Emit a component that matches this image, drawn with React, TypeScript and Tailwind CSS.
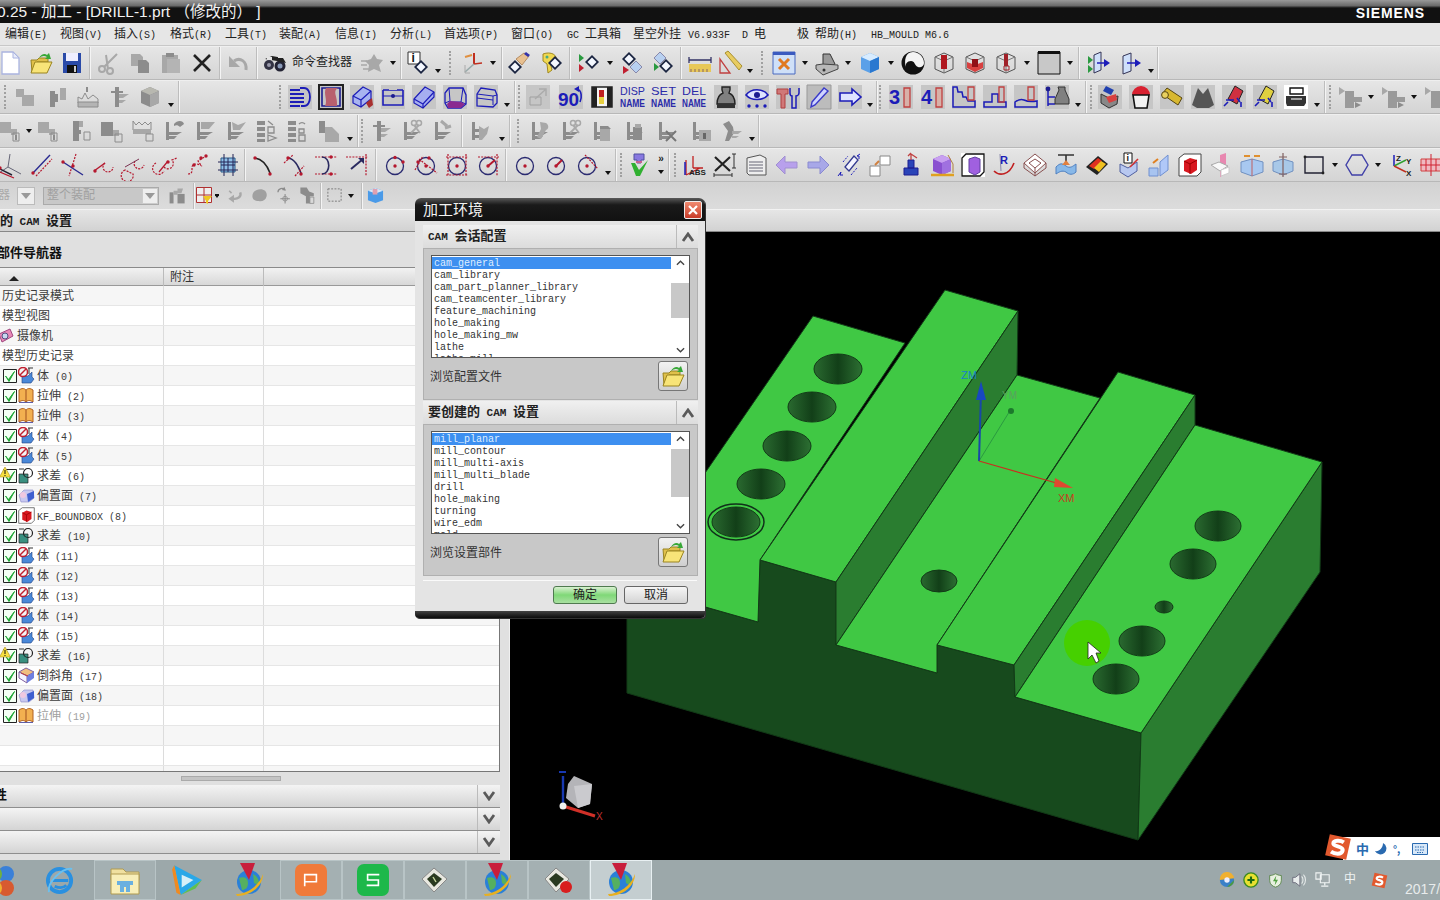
import React, { ReactNode } from 'react';

const B = '#1c1cb8', R = '#b5182e', Gr = '#a8a8a8', Gd = '#8c8c8c', Dk = '#2a2a70';
const P = (d: string, f = 'none', s = 'none', w = 1, da?: string) => <path d={d} fill={f} stroke={s} strokeWidth={w} strokeDasharray={da} />;
const C = (x: number, y: number, r: number, f = 'none', s = 'none', w = 1) => <circle cx={x} cy={y} r={r} fill={f} stroke={s} strokeWidth={w} />;
const Tile = <rect width="24" height="24" fill="#c6c6c6" />;
const Dia = (x: number, y: number, c = '#f4f8ff') => <>{P(`M${x} ${y - 7}l7 7-7 7-7-7z`, '#1a2440')}{P(`M${x} ${y - 4.5}l4.5 4.5-4.5 4.5-4.5-4.5z`, c)}</>;
const Txt = (x: number, y: number, t: string, f: string, s = 9, w = 400, tl?: number) => <text x={x} y={y} fill={f} fontSize={s} fontWeight={w} textLength={tl} lengthAdjust={tl ? 'spacingAndGlyphs' : undefined} fontFamily="Liberation Sans, sans-serif">{t}</text>;
const Cube = (c1: string, c2: string, c3: string) => <>{P('M12 2l9 4v12l-9 4-9-4V6z', c2)}{P('M3 6l9 4 9-4-9-4z', c1)}{P('M12 10l9-4v12l-9 4z', c3)}</>;
const Wire = (inner: ReactNode) => <>{P('M12 2l9 4v12l-9 4-9-4V6z', 'none', '#555')}{P('M3 6l9 4 9-4M12 10v12', 'none', '#777')}{inner}</>;
const Rd = (d: string) => P(d, 'none', R, 1.2, '2 1.2');
const Dot = (x: number, y: number, c = R) => C(x, y, 1.7, c);
const Ci = (inner: ReactNode) => <>{C(12, 13, 8.5, 'none', Dk, 1.3)}{Dot(12, 13)}{inner}</>;

const ghostStep = P('M2 4h8v6h10v11H8V12H2z', Gr);
const ghostSub = <>{P('M2 3h11v7h6v6h-6v-2H2z', Gr)}{P('M15 14h6v8h-6z', 'none', Gd)}{P('M17 16h2v5h-2z', Gd)}</>;
const flange = <>{P('M4 3h3v18H4zM7 13h13l-5 3H7zM7 17h8l-3 3H7z', Gd)}</>;

const I: Record<string, ReactNode> = {
  new: <>{P('M4 1h11l6 6v16H4z', '#fff', '#aab4e0', 1.3)}{P('M15 1v6h6z', '#e8ecfa', '#aab4e0')}</>,
  open: <>{P('M2 9h6l2-2h9v4H8L3 21z', '#e0c04a', '#9a8420')}{P('M6 11h17l-5 11H2z', '#f8e478', '#9a8420')}{P('M10 7C12 3 16 2 18 4l2-2 2 6-6 0 2-2C15 4 13 5 10 7z', '#38a838')}</>,
  save: <>{P('M3 2h18v20H3z', '#2a4aa8')}{P('M6 2h12v8H6z', '#eef')}{P('M7 14h10v8H7z', '#111')}{P('M14 15h2v6h-2z', '#ccc')}</>,
  cut: <>{C(5, 18, 3, 'none', Gr, 2)}{C(13, 20, 3, 'none', Gr, 2)}{P('M7 16L20 3M11 18L9 4', 'none', Gr, 2)}</>,
  copy: <>{P('M3 3h9l3 3v9H3z', Gr)}{P('M10 9h8l3 3v10H10z', Gd)}</>,
  paste: <>{P('M3 4h16v18H3z', Gr)}{P('M7 2h8v4H7z', Gd)}{P('M8 8h13v14H8z', '#b4b4b4')}</>,
  x: P('M4 4L20 20M20 4L4 20', 'none', '#222', 2.6),
  undo: <>{P('M20 19C21 10 14 6 8 10', 'none', Gr, 3)}{P('M3 5v11h11z', Gr)}</>,
  binoc: <>{C(6, 14, 5, '#334')}{C(17, 15, 5.5, '#223')}{C(17, 15, 2.5, '#8a9ab8')}{C(6, 14, 2, '#99a')}{P('M2 8l7-3 11 2 3 5-9-2z', '#222')}{P('M4 6h5v3H4zM15 5h5v2h-5z', '#e4e4e4')}</>,
  star: <>{P('M14 3l3 5 6 1-4 5 2 7-7-3-6 3 1-7-4-4 6-2z', Gr)}{P('M1 10h6M1 14h6M3 18h6', 'none', Gr, 1.5)}</>,
  info: <>{P('M2 1h12v12H2z', '#fff', '#333')}{Txt(5.5, 11, 'i', '#111', 12, 700)}{Dia(15, 16)}</>,
  axes: <>{P('M14 13V2', 'none', '#c03020', 2)}{P('M14 13l8-1', 'none', '#c03020', 1.5)}{P('M14 13L5 21', 'none', '#9aa', 1.6)}{P('M5 6l7-2', 'none', '#e09040', 2)}{P('M5 14v8h5', 'none', '#aaa')}</>,
  hand: <>{Dia(7, 16)}{P('M8 8l8-6 5 3-7 9z', '#e8c090', '#a87c50', .8)}{P('M18 1l4 3-2 2-4-3z', '#33a')}</>,
  palette: <>{P('M4 3c8-3 15 1 13 7l-6 1 2 8-4 3-1-9-4-3z', '#f0d850', '#a08820')}{C(8, 6, 1.5, '#4a8')}{Dia(16, 12)}</>,
  d1: <>{P('M2 3l5 4-5 4z', '#2a9a40')}{P('M2 13l5 4-5 4z', '#c02030')}{Dia(15, 11)}</>,
  d2: <>{Dia(9, 8)}{P('M3 15l6 4-6 4z', '#c02030')}{P('M16 10l6 6-6 6-6-6z', '#b8d0f0', '#88a')}</>,
  d3: <>{P('M9 1l6 6-6 6-6-6z', '#b8d0f0', '#88a')}{Dia(15, 15)}{P('M3 12l5 4-5 4z', '#2a9a40')}</>,
  ruler: <>{P('M2 13h22v8H2z', '#e8c858')}{P('M2 9h22M2 6v6M24 6v6', 'none', '#336', 1.3)}{P('M4 21v-3M8 21v-3M12 21v-3M16 21v-3M20 21v-3', 'none', '#866')}</>,
  angle: <>{P('M2 22V8L12 22z', 'none', '#c04040', 1.3)}{P('M7 2l3-2 14 15-3 4z', '#e8cc60', '#a89030')}</>,
  winx: <>{P('M1 1h22v22H1z', '#cfe0f8', '#4a6ac0')}{P('M1 1h22v3H1z', '#3a5ac0')}{P('M7 8l10 10M17 8L7 18', 'none', '#e07820', 3)}</>,
  scan: <>{P('M8 3h7l5 10-9 4-3-3z', '#9a9a9a', '#333')}{P('M1 14l7-1 15 1v4L8 24 1 18z', '#b8b8b8', '#444')}{C(9, 19, 1.5, '#333')}</>,
  cube: Cube('#d8ecff', '#5aa0e8', '#2a78d0'),
  ball: <>{C(12, 12, 11.5, '#111')}{P('M12 1c6 0 11 5 11 11 0 3-3 5-6 4-4-2-3-6-7-6-4 0-6 3-5 7C3 10 4 1 12 1z', '#f4f4f4')}</>,
  box1: Wire(<>{P('M9 4h6v14H9z', '#b01820')}</>),
  box2: Wire(<>{P('M4 11l8 3 8-3v6l-8 4-8-4z', '#d84040')}{P('M9 8h6v8H9z', '#901018')}</>),
  box3: Wire(<>{P('M10 3h4v12h-4z', '#a02028')}{P('M10 15h5v4h-5z', 'none', '#a02028')}</>),
  blank: <>{P('M1 1h22v22H1z', '#c8c8c8', '#111', 1)}{P('M1 0h22v3H1z', '#111')}</>,
  door1: <>{P('M2 5l5 4-5 4zM2 14l5 4-5 4z', '#2a9a40')}{P('M8 4l7-3v18l-7 3z', '#cfe0fa', '#335')}{P('M11 12h9', 'none', B, 1.5)}{P('M18 8l6 4-6 4z', B)}</>,
  door2: <>{P('M4 5l8-3v18l-8 3z', '#cfe0fa', '#335')}{P('M8 12h10', 'none', B, 1.5)}{P('M16 8l6 4-6 4z', B)}</>,

  g1: ghostStep,
  g2: <>{P('M5 6h5v16H5zM10 9h3v8h-3z', Gd)}{P('M15 3h6v12h-6z', Gr)}</>,
  g3: <>{P('M2 12l4 2 3-6 3 6 5-4 5 4v4H2z', 'none', Gd)}{P('M2 17h20v5H2z', '#b4b4b4', Gd)}{P('M11 2v5', 'none', Gd, 2)}</>,
  g4: <>{P('M8 2h4v20H8z', Gd)}{P('M12 9h10l-6 4h-4zM12 15h7l-4 3h-3z', Gr)}{P('M4 7h12', 'none', Gd, 2)}</>,
  g5: Cube('#b8b8b0', '#8c8c8c', '#a8a8a8'),
  g6: ghostSub,
  g7: <>{P('M4 2h6v9h2v4H10v7H4z', Gd)}{P('M10 2h4v6h-4z', Gr)}{P('M15 13h6v8h-6z', 'none', Gd)}</>,
  g8: <>{P('M1 3h12v14H1z', Gd)}{P('M13 11h6v6h-6z', Gr)}{P('M15 15h7v8h-7z', 'none', Gd)}</>,
  g9: <>{P('M2 2l3 4 3-3 3 3 3-3 3 3 3-3v8H2z', 'none', Gd)}{P('M2 10h18v5H2z', Gr)}{P('M15 15h7v7h-7z', 'none', Gd)}</>,
  g10: <>{flange}{P('M12 5c3-4 9-4 10 0l-4 3c-2-2-4-2-6-1z', Gd)}</>,
  g11: <>{flange}{P('M8 3h14l-6 7H8z', Gr)}</>,
  g12: <>{flange}{P('M8 3l6 3 8-3-6 8H9z', Gr)}</>,
  g13: <>{P('M2 2h8v4H2zM2 8h8v4H2zM2 14h8v4H2zM2 20h8v3H2z', Gd)}{P('M13 2l5 4M13 8h6v6h-6zM13 16l8 3-8 3z', 'none', Gd, 1.3)}</>,
  g14: <>{P('M2 2h8v4H2zM2 8h8v4H2zM2 14h8v4H2zM2 20h8v3H2z', Gd)}{P('M13 5a4 4 0 016 0M13 10h5v4h-5zM13 16h6v6h-6z', 'none', Gd, 1.3)}</>,
  g15: <>{P('M2 2h6v12H2z', Gd)}{P('M8 8h7l7 7v8H8z', Gr)}</>,
  g16: <>{flange}{P('M10 2l6 5M14 9l6-2', 'none', Gr, 3)}</>,
  g17: <>{P('M3 3h3v18H3zM6 10h6v3H6zM6 16h4v3H6z', Gd)}{P('M10 7l5 3 5-3-2 8-5 6h-3z', Gr)}</>,
  g19: <>{P('M2 8h5v14H2z', Gd)}{P('M7 6h5v5h-5zM12 3h7l-2 6h-5z', Gr)}{P('M12 10h9v12h-9z', Gd)}</>,
  gw: <>{flange}{P('M12 3l6 1c3 2 3 6 0 7l-5 9-4-2 4-8z', Gr)}</>,
  gs: <>{flange}{C(19, 4, 2.5, 'none', Gr, 1.5)}{C(14, 4, 2.5, 'none', Gr, 1.5)}{P('M19 6l-8 8M14 6l6 8', 'none', Gr, 1.8)}</>,
  gc: <>{flange}{P('M10 10h10v12H10z', Gr)}{P('M10 7h8l3 3H10z', Gd)}</>,
  gd: <>{flange}{P('M10 8h9v13H10z', Gd)}{P('M12 5h6v4h-6z', Gr)}</>,
  gx: <>{flange}{P('M11 12l10 10M21 12L11 22', 'none', '#777', 2)}</>,
  gi: <>{flange}{P('M10 11h12v11H10z', Gr)}{P('M14 14h3v6h-3z', '#666')}</>,
  gh: <>{P('M3 5l6-3 4 6 1 6-5 8H5l3-10z', Gd)}{P('M12 12h10l-4 3h-6zM12 17h7l-3 2h-4z', Gr)}</>,
  gfa: <>{P('M1 2l6 4-6 4z', Gr)}{P('M7 6h9v6h8v5h-8v6H7z', '#9a9a9a')}{P('M17 17l6 3-6 3z', Gd)}</>,
  lines: <>{Tile}{P('M2 5h10M2 9h14M2 13h14M2 17h14M2 21h10', 'none', B, 2)}{P('M12 3h4c8 0 8 18 0 18h-3', 'none', B, 1.8)}</>,
  sq: <>{P('M0 0h24v24H0z', '#c6c6c6', '#222', 2)}{P('M3 3h18v18H3z', 'none', '#1c1c90', 1.6)}{P('M7 3h12c-6 4 0 8-1 18H6c3-6-2-12 1-18z', '#b8606e')}</>,
  cuboid: <>{Tile}{P('M3 11L13 2l8 4v8L11 22l-8-4z', '#a8b4f0', B, 1.2)}{P('M3 11l8 4 10-9M11 15v7', 'none', B, 1.2)}{P('M16 18l6-5 1 7-4 3z', '#a83030')}</>,
  dash: <>{Tile}{P('M2 5h20M2 5v15h20V5', 'none', B, 1.6)}{P('M8 2h8v3H8z', '#c6c6c6')}{P('M2 11h20', 'none', B)}{C(12, 11, 2, '#1c1c90')}</>,
  slab: <>{Tile}{P('M2 14L13 2l9 5v5L11 23l-9-5z', '#a6aef0', B, 1.2)}{P('M2 14l9 5 11-12M11 19v4', 'none', B, 1.2)}</>,
  wire: <>{Tile}{P('M6 3h14l3 7v9l-5 4H5l-3-5V8z', 'none', B, 1.3)}{P('M6 3L7 16l-5 2M20 3l-2 14H7M18 17l5 2', 'none', B, 1)}{P('M4 19l3-3 11 1 4 2-4 4H5z', '#8a2a90')}</>,
  wire2: <>{Tile}{P('M3 9l4-6 14 2 2 5v8l-4 4-16-1z', 'none', B, 1.3)}{P('M3 9l16 2 4-1M19 11v9M3 13l16 2', 'none', B, 1)}</>,
  arr: <>{Tile}{P('M4 12h11v8H4z', 'none', '#a0a0a0')}{P('M9 14L19 5M13 4h7v7', 'none', '#aaa', 1.4)}</>,
  n90: <>{Tile}{Txt(-1, 21, '90', B, 19, 700)}{P('M18 4c5 1 5 9 3 13', 'none', B, 1.6)}{P('M15 4l5-3v6z', B)}</>,
  bk: <>{P('M2 2h20v20H2z', '#f4f4f4', '#222', 1.5)}{P('M2 2h5v20H2zM17 2h5v20h-5z', '#222')}{P('M9 5h5v7H9z', '#c02020')}{P('M9 12h5v7H9z', '#e8d040')}</>,
  disp: <>{Txt(-1, 10, 'DISP', '#2a2aa8', 11, 400, 25)}{Txt(-1, 22, 'NAME', '#2a2aa8', 10, 700, 25)}</>,
  set: <>{Txt(-1, 10, 'SET', '#2a2aa8', 11, 400, 25)}{Txt(-1, 22, 'NAME', '#2a2aa8', 10, 700, 25)}</>,
  del: <>{Txt(-1, 10, 'DEL', '#2a2aa8', 11, 400, 24)}{Txt(-1, 22, 'NAME', '#2a2aa8', 10, 700, 24)}</>,
  vase: <>{Tile}{P('M8 2h8v3l-1 3c5 2 6 6 6 11H3c0-5 1-9 6-11L8 5z', '#808080', '#222', 1.4)}{P('M3 19h18v4H3z', '#333')}</>,
  eye: <>{Tile}{P('M1 10c5-7 17-7 22 0-5 6-17 6-22 0z', '#dfe4ff', B, 1.6)}{C(12, 10, 3, '#1c1c90')}{Dot(4, 21, B)}{Dot(12, 21, B)}{Dot(20, 21, B)}</>,
  tw: <>{Tile}{P('M1 4h11v5H9v14H5V9H1z', '#d07878', '#b04040', 1)}{P('M14 3v5c0 2 1 3 2 3v12h4V11c1 0 3-1 3-3V3', 'none', B, 1.5)}</>,
  pen: <>{P('M0 0h24v24H0z', '#bcbcbc', '#999')}{P('M5 17L17 3l4 3L8 20l-4 2z', '#cfd4ff', '#3a3ac8', 1.4)}</>,
  arro: <>{Tile}{P('M2 8h12V4l9 8-9 8v-4H2z', '#dfe4ff', B, 1.6)}</>,
  n3: <>{Tile}{Txt(0, 19, '3', B, 20, 700)}{P('M15 3h6v19h-6z', '#d8b0a8', '#c04040', 1.3)}</>,
  n4: <>{Tile}{Txt(0, 19, '4', B, 20, 700)}{P('M15 3h6v19h-6z', '#d8b0a8', '#c04040', 1.3)}</>,
  stair: <>{Tile}{P('M1 2h4l1 5h4l1 5h3l2 4h7v6H1z', 'none', B, 1.5)}{P('M16 2h6v13h-6z', 'none', '#c04040', 1.3)}</>,
  step: <>{Tile}{P('M1 22v-5h8V9h6v8h8v5z', 'none', B, 1.5)}{P('M16 2h5v15h-5z', 'none', '#c04040', 1.3)}</>,
  wave: <>{Tile}{P('M1 22v-5c4-3 6-3 9-2 4 2 7 2 13 1v6z', 'none', B, 1.5)}{P('M14 2h6v13h-6z', 'none', '#c04040', 1.3)}</>,
  nodev: <>{Tile}{P('M3 4v17M3 12h7M3 19h7', 'none', B, 1.5)}{C(3, 4, 2.4, '#1c1c90')}{P('M13 2h7v3l4 9v5H10v-5l4-9z', '#808080', '#333')}</>,
  bl: <>{Tile}{P('M8 1l8 4-3 5-8-4z', '#2040b0')}{P('M3 9l8 4 9-2-1 8-8 4-8-5z', '#888', '#333')}{P('M8 12l10-3 1 6-8 3z', '#d84040')}</>,
  dome: <>{Tile}{P('M3 10a9 9 0 0118 0z', '#d82030')}{P('M4 10h16l-2 13H6z', '#f2f2f2', '#111', 1.6)}</>,
  cyl: <>{Tile}{P('M2 9l5-6 15 10-4 7z', '#d8b830', '#554410', 1)}{C(5, 10, 3.4, '#e8d060', '#554410')}</>,
  frus: <>{Tile}{P('M7 3h10l6 17-5 3H6l-5-3z', '#555')}{P('M7 3h10l-5 6z', '#ccc')}</>,
  redxy: <>{Tile}{P('M6 14L13 1l8 5-6 13z', '#d03040', '#222')}{P('M2 21l4-4M4 15h8M15 13l3 4M19 17v5', 'none', B, 1.6)}</>,
  yelxy: <>{Tile}{P('M6 14L13 1l8 5-6 13z', '#e0d040', '#222')}{P('M2 21l4-4M4 15h8M15 13l3 4M19 17v5', 'none', B, 1.6)}</>,
  print: <>{P('M0 0h24v24H0z', '#fff')}{P('M6 3h13v6H6z', '#fff', '#111', 1.4)}{P('M2 11h20v7l-2 3H3l-1-3z', '#333')}{P('M7 14h11', 'none', '#ddd', 1.3)}</>,

  rAx: <>{P('M10 14L12 1M10 14l13 7M10 14L1 20', 'none', '#667', 1)}{P('M0 15l14 7', 'none', '#223', 1.5)}{P('M2 19l14 6', 'none', R, 1.2)}{Dot(2, 15)}</>,
  rLine: <>{P('M3 20L20 2', 'none', '#2a2a90', 1.4)}{Rd('M6 23L22 6')}{Dot(3, 20)}</>,
  rCross: <>{Rd('M15 1L8 23')}{P('M2 9l20 13', 'none', '#2a2a90', 1.4)}{Dot(2, 9)}{Dot(12, 13)}</>,
  rRope: <>{P('M2 18L13 10', 'none', R, 1.5)}{Rd('M13 10a5 5 0 108 4')}{Dot(3, 18)}</>,
  rRope2: <>{Rd('M2 17a6 6 0 108 4zM12 8a5 5 0 109 4')}{P('M2 14l14-8', 'none', '#7a3050', 1)}</>,
  rOpen: <>{Rd('M2 10a6 6 0 108 8M10 14a5 5 0 108-7l5-2')}{P('M5 19L14 8', 'none', R, 1.2)}{Dot(14, 9)}</>,
  rOpen2: <>{Rd('M3 21c8 0 0-10 8-10 6 0 8 6 2-3l8-5')}{Dot(16, 5)}{Dot(21, 3)}{Dot(9, 12)}</>,
  grid: <>{P('M5 5h14v14H5z', '#8fc0e8', '#2a5a88')}{P('M12 5v14M5 12h14M2 9h20M2 17h20M8 1v22M17 1v22', 'none', '#225', 1)}</>,
  arc1: <>{P('M3 5c7 1 12 7 15 15', 'none', '#222', 1.6)}{Dot(3, 5)}{Dot(18, 21)}</>,
  arc2: <>{P('M5 5c7 1 10 8 13 15', 'none', '#2a2a60', 1.6)}{Rd('M1 10l9-8M12 23l9-10')}{Dot(5, 5)}{Dot(18, 21)}</>,
  arc3: <>{Rd('M1 4h22M1 21h22')}{P('M8 4c9 0 9 17 0 17', 'none', '#2a2a60', 1.6)}{Dot(17, 4)}{Dot(17, 21)}</>,
  arc4: <>{Rd('M1 4h22M21 1v22')}{P('M6 16L18 6', 'none', '#2a2a60', 2)}{P('M13 5h6v6z', '#2a2a60')}</>,
  c1: Ci(<>{Dot(20, 9)}{Dot(12, 4.5)}</>),
  c2: Ci(<>{Rd('M5 6l18 14M1 17l8-14')}{Dot(4, 9)}{Dot(15, 5)}</>),
  c3: Ci(Rd('M1 4h22M1 22h22M3 1v22M21 1v22')),
  c4: Ci(<>{Rd('M2 4h21M21 1v22')}{P('M12 13l7-6', 'none', R, 2)}</>),
  c5: Ci(null),
  c6: Ci(P('M12 13l6-6', 'none', R, 2)),
  c7: Ci(Rd('M10 2l13 14')),
  chk: <>{P('M6 1h10v6h-3v3H9V7H6z', '#8878e0', '#5050a0')}{P('M3 10l4 0 4 7 9-10-8 16H8z', '#30b030')}{P('M8 8h6v2H8z', '#c86090')}</>,
  abs: <>{P('M4 22V7M4 22l14-7M11 15V3M11 15h10', 'none', '#c02020', 1.3)}{P('M3 22V9', 'none', B, 1.5)}{Txt(7, 22, 'ABS', '#222', 8, 700)}</>,
  xd: <>{P('M2 4l15 14M17 4L2 18', 'none', '#222', 2.2)}{P('M19 1h4M21 1v14M19 15h4M1 22h18M1 20v4M19 20v4', 'none', '#333')}</>,
  lst: <>{P('M3 5l13-3 6 3v17H5L3 20z', '#eee', '#555')}{P('M5 9h14M5 12h14M5 15h14M5 18h14', 'none', '#667')}</>,
  al: P('M10 3L1 12l9 9v-6h12V9H10z', '#b8a0ec', '#a090d0'),
  ar: P('M14 3l9 9-9 9v-6H2V9h12z', '#a8a8e8', '#8a8ad0'),
  flip: <>{P('M8 14L17 3l4 4-9 11z', '#f4f4ff', '#333a90', 1.3)}{P('M1 23l3-4-1 3h3M23 1l-3 2h2v3', 'none', B, 1)}{P('M6 9l5-6M14 22l6-7', 'none', B, 1, '2 1.5')}</>,
  sq2: <>{P('M12 3h10v9H12z', '#fff', '#888')}{P('M2 13h10v10H2z', '#fff', '#888')}{P('M7 12l4-4', 'none', '#d08040', 2)}</>,
  plat: <>{P('M5 15h14v7H5zM9 7h6v8H9z', '#2a44b8', '#1c1c90')}{P('M12 7V1M12 1l6 4M9 3l3-3', 'none', '#c04040', 1.3)}</>,
  pmea: <>{Cube('#c8a0f0', '#8a50d0', '#a070e0')}{P('M1 22h23', 'none', '#e0a020', 2.5)}{P('M18 2l5 9v9', 'none', '#b08040')}</>,
  boxp: <>{P('M0 0h24v24H0z', '#fff')}{P('M5 1h18v18l-4 4H1V5z', 'none', '#111', 1.3)}{P('M8 6l6-2 5 2v13l-5 3-6-3z', '#a060e0', '#6040a0')}{P('M1 5l4-4M19 23l4-4', 'none', '#111')}</>,
  rarc: <>{Txt(8, 11, 'R', B, 11, 700)}{P('M2 18c5 5 15 5 20-8', 'none', '#c02020', 1.6)}{P('M8 1l1 17', 'none', '#88a')}</>,
  wf: <>{P('M12 1l11 9-11 10L1 10z', '#fff', '#885050')}{P('M12 6l6 4-6 5-6-5zM12 15v8M1 10v5l11 8 11-8v-5', 'none', '#885050')}</>,
  mold: <>{P('M4 2h16M12 2v8', 'none', '#333', 1.6)}{P('M2 14c4-4 6-4 10-1 4 3 7 0 10-2v8c-3 3-7 3-10 0-4-2-7 0-10 2z', '#88b8e8', '#5080c0')}{P('M8 12h8l-4-5z', '#e08040')}</>,
  stripe: <>{P('M1 14L13 3l10 8-11 11z', '#222')}{P('M4 13L13 5l4 3-8 8z', '#e03020')}{P('M9 15l7-7 5 3-7 8z', '#f0c020')}</>,
  bi: <>{P('M4 11l8 4 9-6v9l-9 6-8-5z', '#b8c8f0', '#5060a0')}{P('M8 0h8v10H8z', '#fff', '#111')}{Txt(10.5, 8, 'i', '#111', 9, 700)}{P('M14 14l8-8', 'none', '#d03030', 1.6)}</>,
  cyls: <>{P('M13 9l8-7v15l-8 6z', '#b0c8f8', '#7090d0')}{P('M2 15h9v8H2z', '#a8c4f0', '#7090d0')}{P('M6 10l5-4', 'none', '#e08020', 2)}</>,
  kf: <>{P('M1 5l5-4h17v18l-4 4H1z', '#fff', '#444')}{P('M6 8l6-3 7 2v10l-6 4-7-3z', '#d81820')}{P('M6 8l6 3 7-4M12 11v10', 'none', '#900')}</>,
  pln: <>{P('M11 2l6-2v20l-6 4z', '#e888b0')}{P('M2 12l8-3 9 4-8 5z', '#f8f8f8', '#aaa')}{P('M12 17l8-3v6l-8 3z', '#fff', '#ccc')}</>,
  blk2: <>{P('M1 9l11-3 11 3v10l-11 4-11-4z', '#a8c8f0', '#7090c0')}{P('M12 6v17', 'none', '#c06060')}{P('M4 3h6M14 3h6', 'none', '#e09030', 2)}</>,
  blk3: <>{P('M2 9l10-3 10 3v9l-10 4-10-4z', '#a8c8e8', '#7090c0')}{P('M12 0v24M8 4h8M8 21h8', 'none', '#806060', 1.2)}</>,
  rect: <>{P('M3 4h18v16H3z', 'none', '#223', 1.4)}{C(3, 4, 1.4, '#222')}{C(21, 20, 1.4, '#222')}</>,
  hex: P('M7 2h10l6 10-6 10H7L1 12z', 'none', '#4040a8', 1.4),
  xyz: <>{P('M6 13V2', 'none', B, 1.5)}{P('M6 13l12-6', 'none', '#30a030', 1.5)}{P('M6 13l12 6', 'none', '#c03020', 1.5)}{Txt(8, 8, 'Z', '#222', 8, 700)}{Txt(18, 11, 'Y', '#222', 8, 700)}{Txt(18, 23, 'X', '#222', 8, 700)}</>,
  tgt: <>{P('M2 6h20v12H2z', '#f0b8c0', '#d04040')}{P('M12 1v22M1 12h22M7 6v12M17 6v12', 'none', '#d02030', 1)}</>,
  uturn: <>{P('M18 8c2 6-4 9-9 8', 'none', Gr, 3)}{P('M10 11v10l-7-5z', Gr)}{P('M4 6l3 3', 'none', Gr, 2)}</>,
  blob: <>{P('M3 13c0-6 5-9 10-9 6 0 9 4 8 9-1 5-6 7-10 6-5 0-8-2-8-6z', '#a0a0a0')}</>,
  tcross: <>{P('M5 8a5 5 0 019-3', 'none', Gd, 1.6)}{P('M13 1l2 5-5-1z', Gd)}{P('M14 10v12M8 16h12', 'none', Gd, 1.3)}{C(14, 16, 3, 'none', Gd)}</>,
  gflag: <>{P('M3 2h8l3 5 6 2v4h-5v9h-5v-9L3 9z', Gd)}{P('M15 14h5v8h-5z', 'none', Gd)}</>,
};

const W: Record<string, string> = {
  1: 'w-[1px]', 2: 'w-[2px]', 3: 'w-[3px]', 4: 'w-[4px]', 5: 'w-[5px]', 6: 'w-[6px]', 7: 'w-[7px]', 8: 'w-[8px]', 9: 'w-[9px]', 10: 'w-[10px]',
  12: 'w-[12px]', 13: 'w-[13px]', 96: 'w-[96px]',
};

function Tok({ t }: { t: string }) {
  const c = t[0], n = t.slice(1);
  if (t === 'vv') return <div className="w-[12px] h-[33px] shrink-0 flex flex-col items-center justify-center gap-[6px]"><span className="text-[10px] leading-[8px] font-bold text-[#222]">»</span><i className="block w-0 h-0 border-x-[3px] border-t-[4px] border-x-transparent border-t-[#111]" /></div>;
  if (t.startsWith('vl')) return <div className={`${W[t.slice(2)]} h-[33px] shrink-0 flex justify-center items-end pb-[7px]`}><i className="block w-0 h-0 border-x-[3px] border-t-[4px] border-x-transparent border-t-[#111]" /></div>;
  if (c === 'v' && /^v\d+$/.test(t)) return <div className={`${W[n]} h-[25px] shrink-0 flex justify-center items-center`}><i className="block w-0 h-0 border-x-[3px] border-t-[4px] border-x-transparent border-t-[#111]" /></div>;
  if (c === '|') return <div className={`${W[n]} h-[33px] shrink-0 flex justify-center`}><i className="block w-[1px] h-full bg-[#bdbdbd] border-r border-r-[#f4f4f4] box-content" /></div>;
  if (c === '!') return <div className={`${W[n]} h-[33px] shrink-0 flex justify-center items-center`}><i className="block w-[2px] h-[24px] border-l-2 border-dotted border-l-[#a0a0a0]" /></div>;
  if (c === ':') return <div className={`${W[n]} shrink-0`} />;
  return <div className="w-[31px] h-[33px] shrink-0 flex items-center justify-center"><svg viewBox="0 0 24 24" className="w-[24px] h-[24px] overflow-visible">{I[t]}</svg></div>;
}
const Sm = ({ n, cls = 'w-[24px]' }: { n: string; cls?: string }) => <div className={`${cls} h-[26px] shrink-0 flex items-center justify-center`}><svg viewBox="0 0 24 24" className="w-[19px] h-[19px] shrink-0 overflow-visible">{I[n]}</svg></div>;
const Sh = ({ t }: { t: string }) => <div className="h-[26px] shrink-0 flex items-center overflow-hidden"><Tok t={t} /></div>;

function Row({ s, extra, cls = '' }: { s: string; extra?: ReactNode; cls?: string }) {
  return <div className={`h-[34px] shrink-0 flex items-center overflow-hidden border-b border-b-[#b8b8b8] border-t border-t-[#efefef] bg-gradient-to-b from-[#e6e6e6] to-[#d4d4d4] ${cls}`}>{s.trim().split(/\s+/).map((t, i) => <Tok key={i} t={t} />)}{extra}</div>;
}

const Mx = ({ t, s = 'text-[10px]' }: { t: string; s?: string }) => <>{t.split(/([\x00-\x7f]+)/).map((p, i) => /^[\x00-\x7f]+$/.test(p) ? <span key={i} className={s}>{p}</span> : p)}</>;

const menu: [string, string][] = [['编辑(E)', 'w-[55px]'], ['视图(V)', 'w-[54px]'], ['插入(S)', 'w-[56px]'], ['格式(R)', 'w-[55px]'], ['工具(T)', 'w-[54px]'], ['装配(A)', 'w-[56px]'], ['信息(I)', 'w-[55px]'], ['分析(L)', 'w-[54px]'], ['首选项(P)', 'w-[67px]'], ['窗口(O)', 'w-[56px]'], ['GC 工具箱', 'w-[66px]'], ['星空外挂', 'w-[55px]'], ['V6.933F', 'w-[54px]'], ['D 电', 'w-[55px]'], ['极', 'w-[18px]'], ['帮助(H)', 'w-[56px]'], ['HB_MOULD M6.6', 'w-[100px]']];

const Check = () => <svg viewBox="0 0 14 14" className="w-[14px] h-[14px] shrink-0">{P('M.5.5h13v13H.5z', '#f4fff4', '#222')}{P('M2.5 7l3 3.5 6-8-5.5 10z', '#22a838', '#22a838', 1)}</svg>;
const Body = <svg viewBox="0 0 17 17" className="w-[17px] h-[17px] shrink-0">{P('M4 9h6l4-4v5l2 2-3 4H4z', '#4a88d8', '#204080', .6)}{C(5, 5, 4.5, '#f4f4f4', '#c02030', 1.5)}{P('M2 8l6-6', 'none', '#c02030', 1.5)}{P('M10 1h5M11 1v6', 'none', '#333')}</svg>;
const Ext = <svg viewBox="0 0 17 17" className="w-[17px] h-[17px] shrink-0">{P('M1 3c3-2 5-2 7 0 2-2 4-2 7 0v12c-3-2-5-2-7 0-2-2-4-2-7 0z', '#f2b050', '#b06020')}{P('M8 3v12', 'none', '#a05020')}{P('M1 15h14v1H1z', '#6060a8')}</svg>;
const Sub = <svg viewBox="0 0 17 17" className="w-[17px] h-[17px] shrink-0">{P('M1 7h9v9H1z', '#3a9080', '#222', .7)}{C(10, 6, 4.5, 'none', '#222', 1.2)}{P('M1 2h5', 'none', '#333')}</svg>;
const Off = <svg viewBox="0 0 17 17" className="w-[17px] h-[17px] shrink-0">{P('M1 8l5-5h9l1 8-5 4H3z', '#c8c8f0', '#8888c8', .6)}{P('M9 7l7-3v7l-6 4z', '#4060d0')}{C(5, 8, 3, '#f0c8e0')}</svg>;
const Kf = <svg viewBox="0 0 24 24" className="w-[17px] h-[17px] shrink-0">{I.kf}</svg>;
const Chm = <svg viewBox="0 0 17 17" className="w-[17px] h-[17px] shrink-0">{P('M1 5l7-4 8 4-7 4z', '#f0c080', '#8060a0')}{P('M1 5l8 4v7l-8-5z', '#f4f4ff', '#8060a0')}{P('M9 9l7-4v6l-7 5z', '#7080e0')}{P('M3 6l7 3', 'none', '#c04040')}</svg>;
const Cam = <svg viewBox="0 0 16 16" className="w-[16px] h-[16px] shrink-0 -ml-[2px]">{P('M1 6l11-5 3 7-11 6z', '#e88ab8', '#a04880')}{C(7, 8, 3, '#c8d8f0', '#505080')}</svg>;
const Warn = <svg viewBox="0 0 12 12" className="w-[12px] h-[12px] absolute left-[-1px] top-[-1px]">{P('M6 1l5.5 10H.5z', '#f8e040', '#a89020', .6)}{P('M5.5 4h1v4h-1zM5.5 9h1v1h-1z', '#111')}</svg>;

const rows: [string, ReactNode, boolean, boolean][] = [
  ['体 (0)', Body, false, false], ['拉伸 (2)', Ext, false, false], ['拉伸 (3)', Ext, false, false], ['体 (4)', Body, false, false], ['体 (5)', Body, false, false],
  ['求差 (6)', Sub, true, false], ['偏置面 (7)', Off, false, false], ['KF_BOUNDBOX (8)', Kf, false, false], ['求差 (10)', Sub, false, false],
  ['体 (11)', Body, false, false], ['体 (12)', Body, false, false], ['体 (13)', Body, false, false], ['体 (14)', Body, false, false], ['体 (15)', Body, false, false],
  ['求差 (16)', Sub, true, false], ['倒斜角 (17)', Chm, false, false], ['偏置面 (18)', Off, false, false], ['拉伸 (19)', Ext, false, true],
];

function TreeRow({ i, children }: { i: number; children?: ReactNode }) {
  return <div className={`h-[20px] shrink-0 grid grid-cols-[164px_100px_1fr] border-b border-b-[#e6e6e6] ${i % 2 ? 'bg-white' : 'bg-[#f6f6f6]'}`}>
    <div className="border-r border-r-[#dcdcdc] flex items-center text-[12px] text-[#3c3c3c] overflow-hidden whitespace-nowrap [&>span]:pt-[2px]">{children}</div>
    <div className="border-r border-r-[#dcdcdc]" />
    <div />
  </div>;
}

const Chev = ({ up }: { up?: boolean }) => <svg viewBox="0 0 14 10" className="w-[14px] h-[10px]">{P(up ? 'M2 9l5-7 5 7' : 'M2 1l5 7 5-7', 'none', '#5a5a5a', 2.8)}</svg>;

function Collapsed({ t }: { t?: string }) {
  return <div className="h-[23px] shrink-0 flex bg-gradient-to-b from-[#f4f4f4] to-[#d4d4d4] border-b border-b-[#8e8e8e]">
    <div className="flex-1 text-[13px] font-bold text-[#111] -ml-[6px] leading-[22px] overflow-hidden">{t}</div>
    <div className="w-[23px] border-l border-l-[#bbb] flex items-center justify-center"><Chev /></div>
  </div>;
}

function ListBox({ items, thumb, more }: { items: string[]; thumb: string; more: string }) {
  return <div className="h-[103px] mx-[7px] mt-[6px] border border-[#555] bg-white flex overflow-hidden">
    <div className="flex-1 overflow-hidden pt-[1px]">
      {items.map((t, i) => <div key={t} className={`h-[12px] leading-[14px] text-[10px] pl-[2px] whitespace-nowrap overflow-hidden ${i === 0 ? 'bg-[#3d8ff0] text-[#dfeeff]' : 'text-[#333]'}`}>{t}</div>)}
      <div className="h-[12px] leading-[14px] text-[10px] pl-[2px] text-[#333]">{more}</div>
    </div>
    <div className="w-[18px] shrink-0 flex flex-col items-center py-[3px]">
      <svg viewBox="0 0 10 6" className="w-[9px] h-[6px] mt-[1px]">{P('M1 5l4-4 4 4', 'none', '#444', 1.5)}</svg>
      <div className={`w-full bg-[#c8c8c8] ${thumb}`} />
      <svg viewBox="0 0 10 6" className="w-[9px] h-[6px] mt-auto mb-[1px]">{P('M1 1l4 4 4-4', 'none', '#444', 1.5)}</svg>
    </div>
  </div>;
}

const FolderBtn = () => <div className="w-[30px] h-[30px] border border-[#777] rounded-[3px] bg-gradient-to-b from-[#f2f2f2] to-[#cfcfcf] flex items-center justify-center"><svg viewBox="0 0 24 24" className="w-[24px] h-[24px]">{I.open}</svg></div>;

function Section({ title, items, thumb, more, browse }: { title: string; items: string[]; thumb: string; more: string; browse: string }) {
  return <>
    <div className="h-[23px] ml-[8px] mr-[7px] flex bg-gradient-to-b from-[#f0f0f0] to-[#dcdcdc]">
      <div className="flex-1 pl-[5px] text-[13px] font-bold leading-[23px] text-[#222]"><Mx t={title} s="text-[11px]" /></div>
      <div className="w-[22px] border-l border-l-[#bbb] flex items-center justify-center"><Chev up /></div>
    </div>
    <div className="h-[152px] ml-[8px] mr-[7px] bg-[#c8c8c8] border border-[#b0b0b0]">
      <ListBox items={items} thumb={thumb} more={more} />
      <div className="flex items-center justify-between pl-[6px] pr-[9px] mt-[3px] h-[30px] text-[12px] text-[#333]"><span className="pt-[3px]">{browse}</span><FolderBtn /></div>
    </div>
  </>;
}

function Dialog() {
  return <div className="absolute left-[415px] top-[198px] w-[290px] h-[420px] rounded-t-[6px] rounded-b-[4px] bg-[#e4e4e4] flex flex-col overflow-hidden shadow-[1px_1px_0_#333]">
    <div className="h-[23px] shrink-0 bg-gradient-to-b from-[#5a5a5a] via-[#1a1a1a] via-30% to-[#111] flex items-center pl-[8px] pr-[3px] justify-between">
      <span className="text-[#f2f2f2] text-[15px] leading-[16px] pt-[5px]">加工环境</span>
      <span className="w-[18px] h-[18px] rounded-[2px] bg-gradient-to-b from-[#f08a70] to-[#c83a28] border border-[#eee] flex items-center justify-center"><svg viewBox="0 0 12 12" className="w-[12px] h-[12px]">{P('M2 2l8 8M10 2l-8 8', 'none', '#fff', 2.2)}</svg></span>
    </div>
    <div className="h-[4px] shrink-0" />
    <Section title="CAM 会话配置" items={['cam_general', 'cam_library', 'cam_part_planner_library', 'cam_teamcenter_library', 'feature_machining', 'hole_making', 'hole_making_mw', 'lathe']} more="lathe_mill" thumb="h-[35px] mt-[17px]" browse="浏览配置文件" />
    <div className="h-[1px] shrink-0" />
    <Section title="要创建的 CAM 设置" items={['mill_planar', 'mill_contour', 'mill_multi-axis', 'mill_multi_blade', 'drill', 'hole_making', 'turning', 'wire_edm']} more="mold" thumb="h-[48px] mt-[7px]" browse="浏览设置部件" />
    <div className="mx-[8px] mt-[4px] h-[1px] bg-[#fafafa] shrink-0" />
    <div className="flex justify-end gap-[7px] pr-[17px] pt-[5px] shrink-0">
      <div className="w-[64px] h-[18px] rounded-[3px] border border-[#4f7a4f] bg-gradient-to-b from-[#d8f0d0] via-[#7fd877] to-[#a8e0a0] text-[12px] leading-[18px] text-center text-[#222]">确定</div>
      <div className="w-[64px] h-[18px] rounded-[3px] border border-[#666] bg-gradient-to-b from-[#f6f6f6] to-[#d4d4d4] text-[12px] leading-[18px] text-center text-[#222]">取消</div>
    </div>
    <div className="mt-auto h-[7px] shrink-0 bg-gradient-to-b from-[#444] to-[#0c0c0c]" />
  </div>;
}

const Top = '#40c844', Wall = '#2a7d30', Front = '#174a1d', Edge = '#123a17';
const Hole = ({ x, y, rx = 24, ry = 15, w }: { x: number; y: number; rx?: number; ry?: number; w?: boolean }) => <>
  {w && <ellipse cx={x} cy={y} rx={rx + 4} ry={ry + 3} fill="none" stroke="#10301a" strokeWidth="1.5" />}
  <ellipse cx={x} cy={y} rx={rx} ry={ry} fill="url(#hg)" stroke="#123a17" strokeWidth="1" />
</>;

function Model() {
  const poly = (pts: string, f: string) => <polygon points={pts} fill={f} stroke={Edge} strokeWidth="1" strokeLinejoin="round" />;
  return <svg viewBox="510 232 930 628" className="block w-[930px] h-[628px]">
    <defs><linearGradient id="hg" x1="0" x2="1" y1="0" y2="0"><stop offset="0" stopColor="#2a6a30" /><stop offset=".5" stopColor="#123f18" /><stop offset="1" stopColor="#2d7033" /></linearGradient></defs>
    {poly('627,585 627,693 1138,840 1141,733 1015,697 1014,665 937,645 937,673 836,645 836,582 760,560 758,622', Front)}
    {poly('1322,462 1320,572 1138,840 1141,733', Wall)}
    {poly('813,316 905,343 760,560 758,622 628,585', Top)}
    {poly('945,290 1018,311 836,582 760,560', Top)}
    {poly('1018,311 1017,375 836,645 836,582', Wall)}
    {poly('1017,375 1100,398 937,645 937,673 836,645', Top)}
    {poly('1118,372 1195,395 1014,665 937,645', Top)}
    {poly('1195,395 1195,425 1015,697 1014,665', Wall)}
    {poly('1195,425 1322,462 1141,733 1015,697', Top)}
    <Hole x={838} y={369} /><Hole x={812} y={407} /><Hole x={787} y={446} /><Hole x={761} y={484} /><Hole x={736} y={522} w />
    <Hole x={939} y={581} rx={18} ry={11} /><Hole x={1218} y={526} rx={23} ry={15} /><Hole x={1193} y={564} rx={23} ry={15} /><Hole x={1164} y={607} rx={9} ry={6} /><Hole x={1142} y={641} rx={23} ry={15} /><Hole x={1116} y={679} rx={23} ry={15} />
    <circle cx="1087" cy="643" r="23" fill="#46d000" />
    <polygon points="1088,642 1088,659 1092,655 1096,663 1099,661 1096,653 1101,653" fill="#fff" stroke="#222" strokeWidth=".8" />
    <path d="M979 461L1011 409" stroke="#2a9a40" strokeWidth="1" /><circle cx="1011" cy="411" r="3" fill="#1c7a2c" />
    <text x="1002" y="399" fill="#5aa060" fontSize="10" fontFamily="Liberation Sans, sans-serif">YM</text>
    <path d="M979 461L981 392" stroke="#1848a8" strokeWidth="2" /><polygon points="981,381 976,400 986,400" fill="#1848c0" />
    <text x="961" y="379" fill="#1a80c8" fontSize="11" fontFamily="Liberation Sans, sans-serif">ZM</text>
    <path d="M979 461L1060 484" stroke="#c83020" strokeWidth="1.2" /><polygon points="1073,488 1055,478 1054,487" fill="#e04830" />
    <text x="1058" y="502" fill="#c84020" fontSize="11" fontFamily="Liberation Sans, sans-serif">XM</text>
    <polygon points="568,784 574,776 592,784 590,804 578,808 566,798" fill="#b4b4b8" /><polygon points="574,786 592,784 590,804 578,808" fill="#cacace" />
    <path d="M563 806V776" stroke="#1838b0" strokeWidth="2.4" /><path d="M559 772h7" stroke="#1838b0" strokeWidth="2" />
    <path d="M563 806L595 816" stroke="#d03028" strokeWidth="3" />
    <circle cx="563" cy="806" r="3.5" fill="#f0f0f0" />
    <text x="596" y="820" fill="#c03030" fontSize="10" fontFamily="Liberation Sans, sans-serif">X</text>
  </svg>;
}

const Ug = () => <svg viewBox="0 0 32 36" className="w-[32px] h-[36px]">{C(16, 20, 12, '#2a80d8')}{P('M6 16c5-2 9 0 9 5s-3 7-6 7zM20 12c4 2 7 7 6 12l-5-3z', '#55b060')}{P('M3 32C14 32 26 24 30 12c0 12-12 22-26 22z', '#e8b020')}{P('M7 1h15l-6 17z', '#c81e3c')}</svg>;

function Task({ btn, on, children }: { btn?: boolean; on?: boolean; children: ReactNode }) {
  return <div className={`w-[62px] h-[40px] shrink-0 flex items-center justify-center ${btn ? 'border border-[#b8c4c6]' : ''} ${on ? 'bg-[#c4ced0] border-[#e8f0f2]' : btn ? 'bg-[#a4b0b2]' : ''}`}>{children}</div>;
}

export default function App() {
  return <div className="relative w-[1440px] h-[900px] overflow-hidden flex flex-col bg-[#d8d8d8] font-['Liberation_Mono','Noto_Sans_CJK_SC',monospace] text-[12px]">
    <div className="h-[23px] shrink-0 bg-gradient-to-b from-[#9a9a9a] from-0% via-[#6a6a6a] via-25% to-[#111] to-35% flex items-end justify-between pb-[1px] font-['Liberation_Sans','Noto_Sans_CJK_SC',sans-serif] text-[#f2f2f2]">
      <span className="text-[15.5px] leading-[20px] -ml-[3px] whitespace-pre">0.25 - 加工 - [DRILL-1.prt （修改的） ]</span>
      <span className="text-[14px] leading-[18px] font-bold tracking-[0.9px] pr-[15px] text-white">SIEMENS</span>
    </div>
    <div className="h-[23px] shrink-0 bg-[#e6e6e6] border-b border-b-[#c8c8c8] flex items-center pl-[5px] pt-[2px] text-[#222] whitespace-nowrap overflow-hidden">
      {menu.map(([t, w]) => <span key={t} className={`${w} shrink-0`}><Mx t={t} /></span>)}
    </div>
    <Row cls="pl-0 [&>*:first-child]:-ml-[6px]" s="new open save |6 cut copy paste x |5 undo |7" extra={<>
      <div className="w-[30px] shrink-0 flex justify-center"><svg viewBox="0 0 24 24" className="w-[24px] h-[24px]">{I.binoc}</svg></div>
      <span className="w-[66px] pl-[2px] shrink-0 text-[12px] text-[#222] whitespace-nowrap">命令查找器</span>
      {'star v12 |3 info vl10 !13 axes v12 |5 hand palette |7 d1 v12 d2 d3 |5 ruler angle vl10 !13 winx v12 scan v12 cube v12 ball box1 box2 box3 v12 blank v12 |6 door1 :2 door2 vl10 |3'.split(' ').map((t, i) => <Tok key={i} t={t} />)}
    </>} />
    <Row s="!10 g1 g2 g3 g4 g5 vl12 |3 :96 !8 lines sq cuboid dash slab wire wire2 vl12 |3 !6 arr :2 n90 bk disp set del vase eye tw pen arro vl10 |3 !4 :3 n3 :1 n4 stair step wave nodev vl12 |3 !7 bl dome cyl frus redxy yelxy print vl12 |3 !8 gfa v12 gfa v12 gfa" />
    <Row cls="[&>*:first-child]:-ml-[6px]" s="g6 v7 g6 :2 g7 g8 g9 g10 g11 g12 g13 g14 g15 vl12 |3 !6 g4 gs g16 |7 g17 vl12 |3 !13 gw gs gc :2 gd :1 gx :3 gi gh vl10 |3" extra={null} />
    <Row cls="border-b-[#888] [&>*:first-child]:-ml-[6px]" s="rAx :1 rLine rCross rRope rRope2 rOpen rOpen2 grid |4 :1 arc1 arc2 arc3 arc4 |7 c1 c2 c3 c4 |5 :1 c5 c6 c7 vl12 |3 !7 chk vv |4 !7 abs xd lst al ar flip sq2 plat pmea boxp rarc wf mold stripe bi cyls kf pln blk2 blk3 rect v12 hex v12 xyz tgt" />
    <div className="h-[28px] shrink-0 bg-gradient-to-b from-[#d2d2d2] to-[#dcdcdc] border-b border-b-[#f2f2f2] flex items-center whitespace-nowrap overflow-hidden">
      <span className="w-[19px] shrink-0 text-[#aaa] -ml-[2px]">器</span>
      <div className="w-[18px] h-[18px] shrink-0 bg-[#eee] border border-[#bbb] flex items-center justify-center"><i className="block w-0 h-0 border-x-[5px] border-t-[6px] border-x-transparent border-t-[#999]" /></div>
      <div className="w-[8px] shrink-0" />
      <div className="w-[116px] h-[18px] shrink-0 bg-[#c8c8c8] border border-[#aaa] flex items-center justify-between pl-[3px] text-[#a0a0a0]">整个装配<div className="w-[16px] h-[16px] bg-[#eee] border border-[#ccc] flex items-center justify-center"><i className="block w-0 h-0 border-x-[5px] border-t-[6px] border-x-transparent border-t-[#999]" /></div></div>
      <div className="w-[3px] shrink-0" />
      <Sm n="g19" cls="w-[31px]" />
      <Sh t="|2" />
      <div className="w-[20px] h-[26px] shrink-0 flex items-center justify-center"><svg viewBox="0 0 18 18" className="w-[18px] h-[18px] shrink-0">{P('M.5.5h15v15H.5z', '#eee', '#b03030')}{P('M8 1v14M1 8h14', 'none', '#b03030')}{P('M7 9h9l-4 5v3l-2-1v-2z', '#f0c820')}</svg></div>
      <Sh t="v4" />
      <div className="w-[4px] shrink-0" />
      <Sm n="uturn" /><Sm n="blob" /><Sm n="tcross" /><Sm n="gflag" />
      <Sh t="|4" />
      <div className="w-[22px] shrink-0 flex justify-center"><svg viewBox="0 0 18 18" className="w-[17px] h-[17px]">{P('M2 2h14v13H2z', 'none', '#777', 1, '2 1.5')}</svg></div>
      <Sh t="v12" />
      <Sh t="|10" />
      <div className="w-[16px] shrink-0 flex justify-center"><svg viewBox="0 0 18 18" className="w-[17px] h-[17px] shrink-0">{P('M9 1l8 3v10l-8 3-8-3V4z', '#4a9ae8')}{P('M1 4l8 3 8-3-8-3z', '#d8e8f8')}{P('M6 2h5v6H6z', '#e0a0b0')}</svg></div>
    </div>
    <div className="h-[22px] shrink-0 bg-gradient-to-b from-[#e6e6e6] to-[#d2d2d2] border-b border-b-[#888] text-[13px] font-bold leading-[24px] text-[#1a1a1a] pl-0 whitespace-nowrap"><Mx t="的 CAM 设置" s="text-[11px]" /></div>
    <div className="flex-1 flex min-h-0">
      <div className="w-[510px] shrink-0 border-r border-r-[#f0f0f0] pr-[9px] flex flex-col bg-[#e0e0e0]">
        <div className="h-[36px] shrink-0 border-b border-b-[#8a8a8a] font-bold text-[13px] leading-[44px] -ml-[3px] text-[#111] whitespace-nowrap">部件导航器</div>
        <div className="h-[18px] shrink-0 grid grid-cols-[164px_100px_1fr] bg-gradient-to-b from-[#f2f2f2] to-[#d8d8d8] border-b border-b-[#999] text-[12px] text-[#333] leading-[21px]">
          <div className="border-r border-r-[#bbb] pl-[9px] flex items-center"><i className="block w-0 h-0 border-x-[5px] border-b-[5px] border-x-transparent border-b-[#222]" /></div>
          <div className="border-r border-r-[#bbb] pl-[6px]">附注</div>
          <div />
        </div>
        <div className="h-[486px] shrink-0 overflow-hidden flex flex-col bg-white border-r border-r-[#777] border-b border-b-[#777]">
          <TreeRow i={0}><span className="pl-[2px]">历史记录模式</span></TreeRow>
          <TreeRow i={1}><span className="pl-[2px]">模型视图</span></TreeRow>
          <TreeRow i={0}>{Cam}<span className="pl-[3px]">摄像机</span></TreeRow>
          <TreeRow i={1}><span className="pl-[2px]">模型历史记录</span></TreeRow>
          {rows.map(([t, ic, w, dim], i) => <TreeRow key={t} i={i % 2}>
            <div className="relative pl-[3px] flex items-center w-[37px] shrink-0 gap-[1px]">{w && Warn}<Check />{ic}</div>
            <span className={dim ? 'text-[#a0a0a0]' : ''}><Mx t={t} /></span>
          </TreeRow>)}
          <TreeRow i={0} /><TreeRow i={1} /><TreeRow i={0} />
        </div>
        <div className="h-[13px] shrink-0 flex items-center pl-[181px]"><div className="w-[100px] h-[5px] bg-[#c4c4c4] border border-[#aaa]" /></div>
        <Collapsed t="性" /><Collapsed /><Collapsed />
      </div>
      <div className="flex-1 bg-black min-w-0 overflow-hidden"><Model /></div>
    </div>
    <div className="h-[40px] shrink-0 flex bg-[#9ca8aa] overflow-hidden">
      <div className="w-[29px] shrink-0 flex items-center -ml-[16px] mr-[16px]"><svg viewBox="0 0 32 32" className="w-[32px] h-[32px] shrink-0">{C(22, 10, 8, '#3a80d8')}{C(22, 24, 8, '#d85a30')}{C(10, 10, 8, '#70b040')}{C(10, 24, 8, '#f0b030')}</svg></div>
      <Task><svg viewBox="0 0 32 32" className="w-[31px] h-[31px]">{C(15, 16, 12, 'none', '#2a90e0', 4)}{P('M8 16h16M10 22c5 2 9 2 12-1', 'none', '#2a90e0', 3)}{P('M4 28C2 18 18 2 28 4', 'none', '#6ac0f0', 2)}</svg></Task>
      <div className="w-[3px] shrink-0" />
      <Task btn><svg viewBox="0 0 32 32" className="w-[32px] h-[32px]">{P('M2 5h12l3 3h13v8H2z', '#f0e0a0', '#b09a50')}{P('M2 10h28v20H2z', '#f8eeb8', '#b09a50')}{P('M8 17h16v4h-3v7h-4v-5h-2v5h-4v-7H8z', '#6ab0e0')}</svg></Task>
      <Task><svg viewBox="0 0 32 32" className="w-[34px] h-[34px]">{P('M4 2l26 14L10 30z', '#2aa8e8')}{P('M4 2l6 28-4-2L2 6z', '#f08a20')}{P('M11 11l11 5-11 7z', '#d8f0f8')}{P('M10 30l20-14-6 8z', '#60c050')}</svg></Task>
      <Task><Ug /></Task>
      <Task btn><div className="w-[32px] h-[32px] rounded-[7px] bg-[#f07a3a] flex items-center justify-center"><svg viewBox="0 0 20 20" className="w-[18px] h-[18px]">{P('M3 17V4h13v8H3', 'none', '#fff', 1.8)}</svg></div></Task>
      <Task btn><div className="w-[32px] h-[32px] rounded-[7px] bg-[#1db84a] flex items-center justify-center"><svg viewBox="0 0 20 20" className="w-[18px] h-[18px]">{P('M17 4H4v6h12v6H3', 'none', '#fff', 1.8)}</svg></div></Task>
      <Task btn><svg viewBox="0 0 28 28" className="w-[28px] h-[28px]">{P('M13 2l13 11-13 13L1 13z', '#e8e8e0', '#888')}{P('M13 7l8 6-8 8-7-8z', '#2a3a20')}{P('M12 11l3 5', 'none', '#c8d8a0', 1.4)}</svg></Task>
      <Task btn><Ug /></Task>
      <Task btn><svg viewBox="0 0 28 28" className="w-[28px] h-[28px]">{P('M11 2l13 11-13 13L0 13z', '#e8e8e0', '#888')}{P('M11 7l8 6-8 8-7-8z', '#2a3a20')}{C(21, 21, 6, '#d81e1e')}</svg></Task>
      <Task btn on><Ug /></Task>
      <div className="flex-1" />
      <div className="w-[225px] shrink-0 flex items-center text-[#eef2f2] overflow-hidden">
        <div className="w-[24px] flex justify-center shrink-0"><svg viewBox="0 0 18 18" className="w-[16px] h-[16px]">{C(9, 9, 8, '#3a80c8')}{P('M1 9a8 8 0 0116-2z', '#f0b030')}{P('M9 17a8 8 0 008-8z', '#4a9a40')}{C(9, 9, 3, '#eef')}</svg></div>
        <div className="w-[24px] flex justify-center shrink-0"><svg viewBox="0 0 18 18" className="w-[16px] h-[16px]">{C(9, 9, 8, '#e8e030', '#3a8a20', 1.5)}{P('M5 9h8M9 5v8', 'none', '#1a6a10', 2.4)}</svg></div>
        <div className="w-[24px] flex justify-center shrink-0"><svg viewBox="0 0 18 18" className="w-[15px] h-[15px]">{P('M2 3c3 0 5-1 7-2 2 1 4 2 7 2v6c0 5-4 7-7 8-3-1-7-3-7-8z', '#e8f0e0', '#508040')}{P('M10 3l-4 7h3l-1 5 4-7H9z', '#50a040')}</svg></div>
        <div className="w-[24px] flex justify-center shrink-0"><svg viewBox="0 0 18 18" className="w-[16px] h-[16px]">{P('M2 6h3l5-4v14l-5-4H2z', '#e8ecec', '#667')}{P('M12 5c2 2 2 6 0 8M14 3c3 3 3 9 0 12', 'none', '#e8ecec', 1.2)}</svg></div>
        <div className="w-[24px] flex justify-center shrink-0"><svg viewBox="0 0 18 18" className="w-[16px] h-[16px]">{P('M6 3h10v9H6zM1 1h6v7H1z', '#a0aaac', '#f0f4f4', 1.2)}{P('M11 12v3M7 16h8', 'none', '#f0f4f4', 1.4)}</svg></div>
        <div className="w-[3px] shrink-0" />
        <span className="w-[24px] text-center text-[12px] shrink-0">中</span>
        <div className="w-[5px] shrink-0" />
        <div className="w-[24px] flex justify-center shrink-0"><svg viewBox="0 0 24 24" className="w-[17px] h-[17px]">{P('M5 1l18 4-4 18L1 19z', '#e2592e')}{P('M17 8c-3-2-9-2-9 1s9 2 8 6-7 3-10 1', 'none', '#fff', 3)}</svg></div>
        <span className="pl-[14px] pt-[18px] text-[14px] text-[#e8ecec] font-['Liberation_Sans',sans-serif] whitespace-nowrap">2017/12/1</span>
      </div>
    </div>
    <Dialog />
    <div className="absolute left-[1323px] top-[833px] h-[27px] flex items-end">
      <div className="w-[29px] h-[27px] flex items-center justify-center relative z-10"><svg viewBox="0 0 24 24" className="w-[28px] h-[28px]">{P('M5 1l18 4-4 18L1 19z', '#e2592e')}{P('M17 8c-3-2-9-2-9 1s9 2 8 6-7 3-10 1', 'none', '#fff', 3.4)}</svg></div>
      <div className="-ml-[9px] pl-[13px] w-[97px] h-[23px] bg-white flex items-center gap-[5px] text-[#2a6ab0] font-bold text-[13px] font-['Noto_Sans_CJK_SC',sans-serif] overflow-hidden whitespace-nowrap">
        <span>中</span>
        <svg viewBox="0 0 14 14" className="w-[14px] h-[14px] shrink-0">{P('M9 1a6 6 0 11-8 8c4 1 8-3 8-8z', '#2a6ab0')}</svg>
        <span className="text-[10px] w-[14px] leading-[10px]">°,</span>
        <svg viewBox="0 0 16 12" className="w-[16px] h-[12px] shrink-0">{P('M.5.5h15v11H.5z', '#d8e8f8', '#2a6ab0')}{P('M3 4h10M3 7h10M5 9.5h6', 'none', '#2a6ab0', 1.2, '1.5 1')}</svg>
      </div>
    </div>
  </div>;
}
